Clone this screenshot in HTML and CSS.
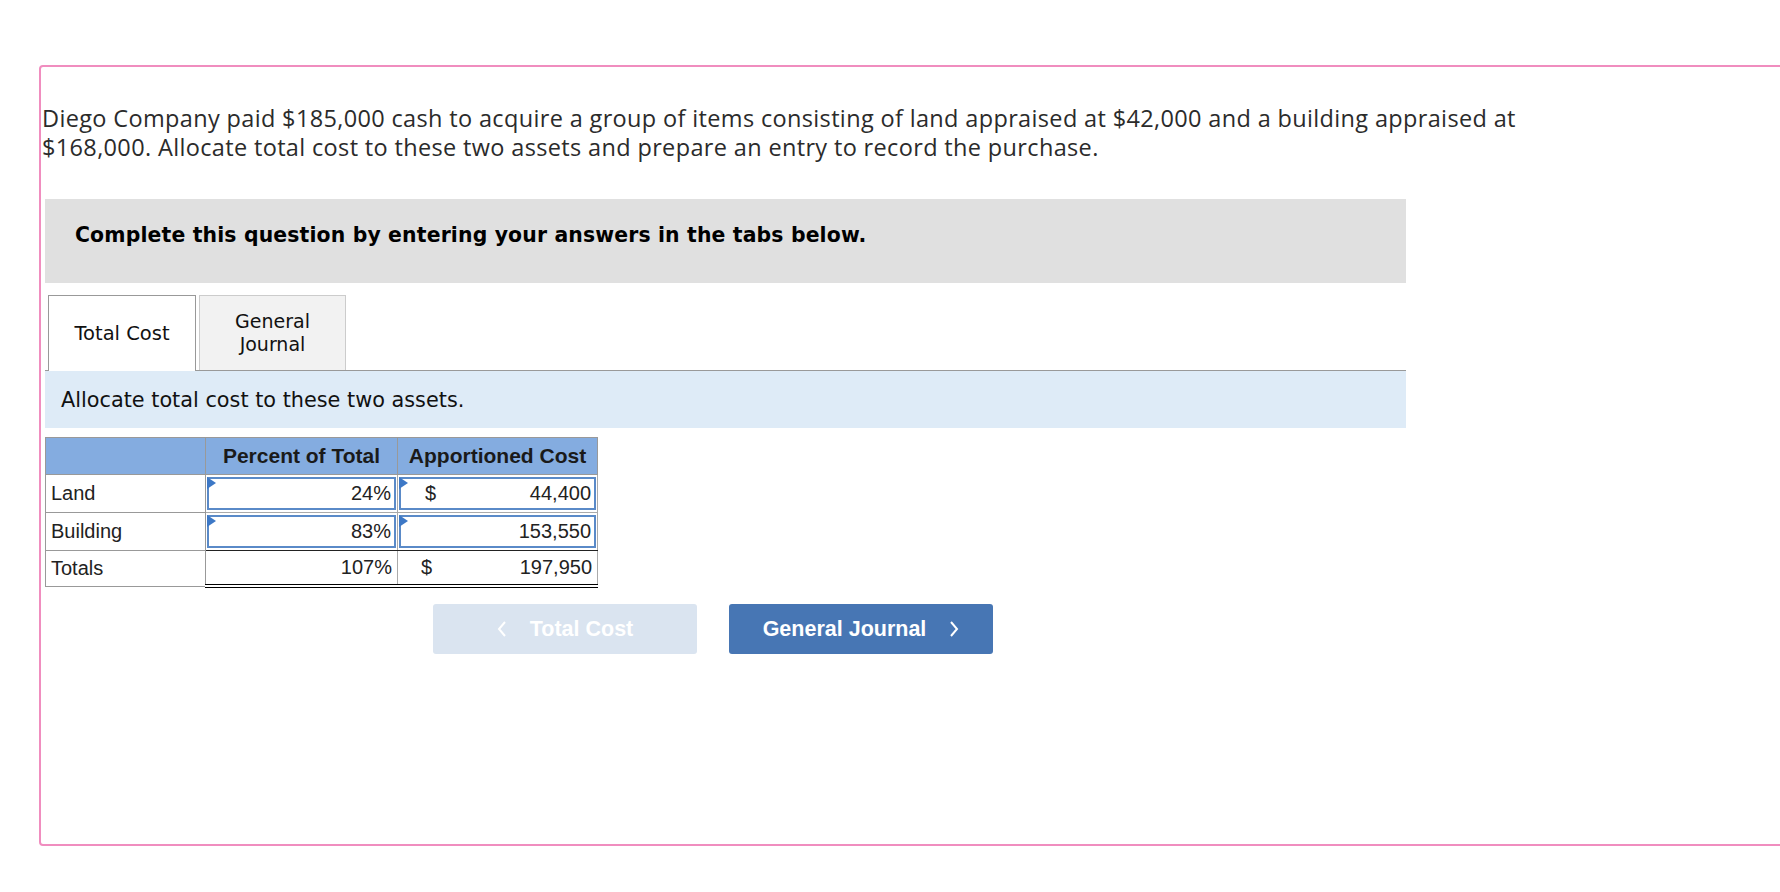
FILE: index.html
```html
<!DOCTYPE html>
<html>
<head>
<meta charset="utf-8">
<link rel="stylesheet" href="styles.css">
</head>
<body>
<div class="frame">
  <p class="prompt">Diego Company paid $185,000 cash to acquire a group of items consisting of land appraised at $42,000 and a building appraised at<br>$168,000. Allocate total cost to these two assets and prepare an entry to record the purchase.</p>
  <div class="panel">
    <div class="notice">Complete this question by entering your answers in the tabs below.</div>
    <div class="tabs">
      <div class="tab active">Total Cost</div>
      <div class="tab">General<br>Journal</div>
    </div>
    <div class="instruction">Allocate total cost to these two assets.</div>
    <table class="grid">
      <colgroup><col class="c1"><col class="c2"><col class="c3"></colgroup>
      <thead>
        <tr><th></th><th>Percent of Total</th><th>Apportioned Cost</th></tr>
      </thead>
      <tbody>
        <tr>
          <td class="label">Land</td>
          <td class="inp"><div class="box"><span class="tri"></span><span class="val">24%</span></div></td>
          <td class="inp"><div class="box"><span class="tri"></span><span class="cur">$</span><span class="val">44,400</span></div></td>
        </tr>
        <tr class="last">
          <td class="label">Building</td>
          <td class="inp"><div class="box"><span class="tri"></span><span class="val">83%</span></div></td>
          <td class="inp"><div class="box"><span class="tri"></span><span class="val">153,550</span></div></td>
        </tr>
        <tr class="totals">
          <td class="label">Totals</td>
          <td class="num"><div class="plain"><span class="val">107%</span></div></td>
          <td class="num"><div class="plain"><span class="cur">$</span><span class="val">197,950</span></div></td>
        </tr>
      </tbody>
    </table>
    <div class="nav">
      <div class="btn prev"><svg class="chev" width="10" height="18" viewBox="0 0 10 18"><path d="M8 2 L2 9 L8 16" fill="none" stroke="#fff" stroke-width="2"/></svg><span>Total Cost</span></div>
      <div class="btn next"><span>General Journal</span><svg class="chev" width="10" height="18" viewBox="0 0 10 18"><path d="M2 2 L8 9 L2 16" fill="none" stroke="#fff" stroke-width="2"/></svg></div>
    </div>
  </div>
</div>
</body>
</html>
```

FILE: styles.css
```css
html, body {
  margin: 0;
  padding: 0;
  overflow: hidden;
  background: #fff;
}
.frame {
  margin: 65px 0 0 39px;
  width: 1800px;
  border: 2px solid #f08dbf;
  border-radius: 4px;
  padding-top: 37px;
  box-sizing: content-box;
  height: 740px;
}
.prompt {
  margin: 0;
  padding-left: 1px;
  font-family: "Open Sans", sans-serif;
  font-size: 23.5px;
  letter-spacing: 0.35px;
  line-height: 28.5px;
  color: #2b2b2b;
}
.panel {
  margin-left: 4px;
  width: 1361px;
}
.notice {
  margin-top: 38px;
  height: 84px;
  box-sizing: border-box;
  padding: 24px 0 0 30px;
  background: #e0e0e0;
  font-family: "DejaVu Sans", Verdana, sans-serif;
  font-weight: bold;
  font-size: 20.4px;
  letter-spacing: 0.15px;
  line-height: 24px;
  color: #000;
}
.tabs {
  margin-top: 12px;
  display: flex;
  gap: 3px;
  padding-left: 3px;
  height: 75px;
  border-bottom: 1px solid #999;
  align-items: flex-start;
}
.tab {
  width: 147px;
  height: 75px;
  box-sizing: border-box;
  border: 1px solid #ccc;
  border-bottom: none;
  background: #f2f2f2;
  display: flex;
  align-items: center;
  justify-content: center;
  text-align: center;
  font-family: "DejaVu Sans", Verdana, sans-serif;
  font-size: 19px;
  line-height: 23px;
  color: #111;
}
.tab.active {
  width: 148px;
  height: 76px;
  border-color: #999;
  background: #fff;
  position: relative;
  z-index: 1;
  font-size: 19.5px;
}
.instruction {
  height: 57px;
  background: #deebf7;
  display: flex;
  align-items: center;
  padding-left: 16px;
  font-family: "DejaVu Sans", Verdana, sans-serif;
  font-size: 20.8px;
  color: #111;
}
.grid {
  margin-top: 9px;
  border-collapse: collapse;
  font-family: "Liberation Sans", Arial, sans-serif;
  font-size: 20px;
  color: #222;
}
.c1 { width: 160px; }
.c2 { width: 192px; }
.c3 { width: 200px; }
.grid th {
  height: 36px;
  padding: 0;
  background: #84ace0;
  border: 1px solid #999;
  font-weight: bold;
  font-size: 21px;
  text-align: center;
  color: #1a1a1a;
}
.grid td {
  padding: 0;
  border: 1px solid #aaa;
  height: 35px;
}
.grid td.label {
  padding-left: 5px;
  border-color: #999;
}
.grid td.inp {
  padding: 1px;
}
.box, .plain {
  position: relative;
  display: flex;
  align-items: center;
  height: 33px;
  box-sizing: border-box;
  border: 2px solid #5a8ac8;
  padding: 0 3px 0 6px;
}
.plain {
  border: none;
  padding: 0 5px 0 23px;
}
.box .cur { margin-left: 18px; }
.val { margin-left: auto; }
.tri {
  position: absolute;
  left: -2px;
  top: -2px;
  width: 0;
  height: 0;
  border-top: 6px solid transparent;
  border-bottom: 6px solid transparent;
  border-left: 9px solid #3d78c6;
}
.grid tr.last td.inp { border-bottom: 1px solid #222; }
.grid tr.totals td { height: 31px; }
.grid tr.totals td.num {
  border-bottom: 4px double #000;
  border-top: 1px solid #222;
}
.nav {
  margin: 16px 0 0 388px;
  display: flex;
  gap: 32px;
}
.btn {
  width: 264px;
  height: 50px;
  border-radius: 3px;
  display: flex;
  align-items: center;
  justify-content: center;
  gap: 23px;
  font-family: "Liberation Sans", Arial, sans-serif;
  font-weight: bold;
  font-size: 21.5px;
  color: #fff;
}
.btn.prev { background: #dae4f0; }
.btn.next { background: #4776b4; }
```
